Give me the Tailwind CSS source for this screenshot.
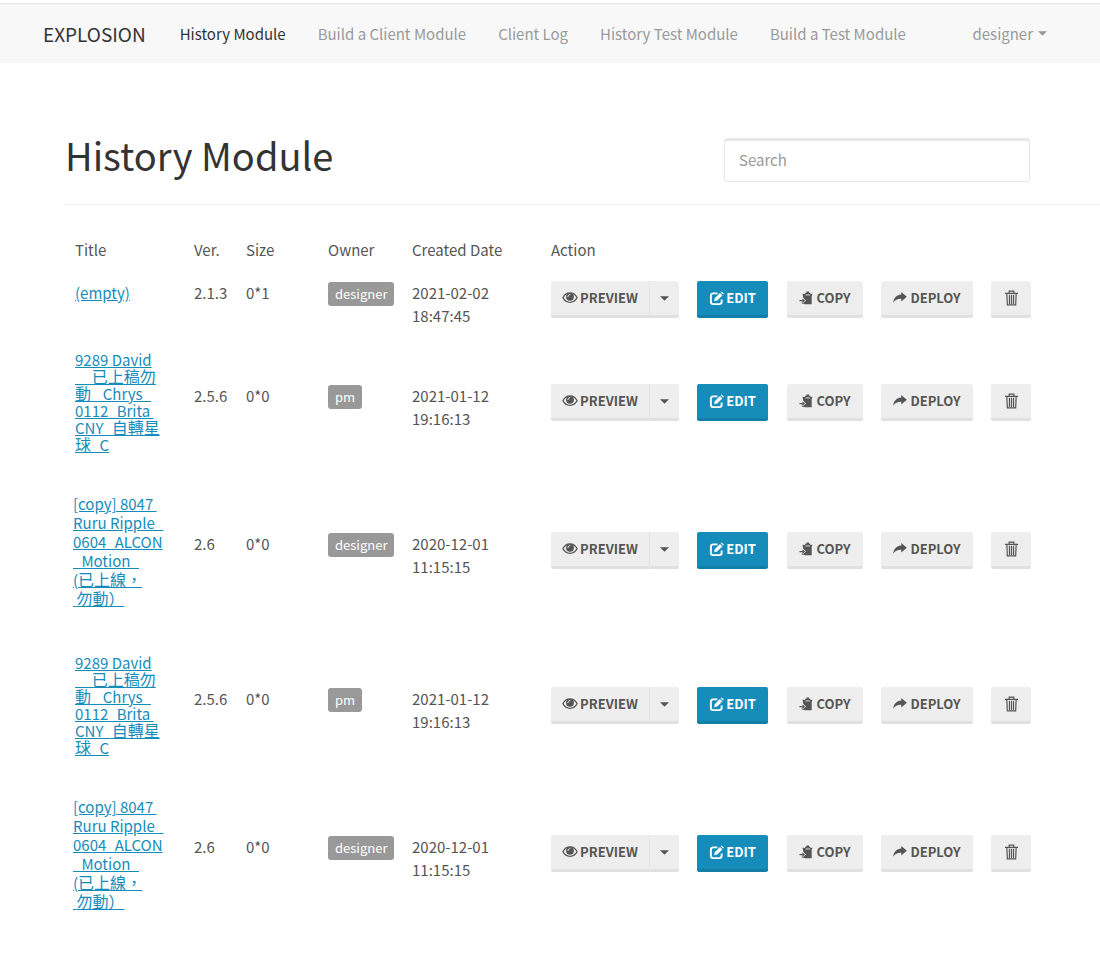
<!DOCTYPE html>
<html lang="zh-Hant">
<head>
<meta charset="utf-8">
<title>History Module</title>
<script src="https://cdn.jsdelivr.net/npm/@tailwindcss/browser@4"></script>
</head>
<body class="bg-white font-['Noto_Sans_CJK_TC',sans-serif] text-[15px] leading-6 text-[#555]">
<svg class="hidden" aria-hidden="true">
  <symbol id="eye" viewBox="0 0 16 14"><path fill="none" stroke="currentColor" stroke-width="1.300" d="M.9 6.800C2.500 3.500 5 1.900 8 1.900s5.500 1.600 7.100 4.900C13.500 9.700 11 11.300 8 11.300S2.500 9.700.9 6.800z"/><circle cx="8" cy="5.800" r="3.900" fill="currentColor"/><path fill="none" stroke="#eee" stroke-linecap="round" d="M5.900 5.600c.1-1.100.9-1.900 2-2"/></symbol>
  <symbol id="edit" viewBox="0 0 16 16"><path fill="none" stroke="currentColor" stroke-width="2" d="M9 2.500H4.500A2.500 2.500 0 0 0 2 5v6.500A2.500 2.500 0 0 0 4.500 14H11a2.500 2.500 0 0 0 2.500-2.500V9"/><path fill="currentColor" d="M5.500 10.800l.6-3.200 5.600-5.500 2.600 2.600-5.600 5.500zM12.500 1.300l1-.9 2.400 2.400-.9 1z"/></symbol>
  <symbol id="copy" viewBox="0 0 16 16"><path fill="currentColor" d="M4 3l3 .500V2h1.500V.500h3V2H13v1.500L15.500 3l-1 2.500V15H6.500l-1.500-1.500 3-2.700L5 8z"/><path fill="currentColor" d="M.5 10.200H4V8.500l3 2.400-3 2.500v-1.700H.5zM2 13.500h3.500V15z"/><path stroke="#eee" d="M7.500 4.500h5"/></symbol>
  <symbol id="share" viewBox="0 0 16 14"><path fill="currentColor" d="M9.500 0L16 5.500 9.500 11V8C5.500 7.800 2.500 9 0 12.500.7 7 4 3.300 9.500 3z"/></symbol>
  <symbol id="trash" viewBox="0 0 14 17"><path fill="none" stroke="currentColor" stroke-width="1.300" d="M0 3.500h14M4.500 3V1h5v2M2 4l.5 12h9L12 4M4.800 5v10M7 5v10M9.200 5v10"/></symbol>
  <symbol id="caret" viewBox="0 0 10 5"><path fill="currentColor" d="M0 0h10L5 5z"/></symbol>
</svg>

<header class="border-t-3 border-white bg-[#f8f8f8]">
  <nav class="flex h-[60px] items-center border-t border-[#e4e4e4] pr-[53px] pl-[43px] text-[#999]">
    <a href="#" class="mr-[34px] text-[19px] text-[#333]">EXPLOSION</a>
    <div class="flex gap-8">
      <a href="#" class="text-[#333]">History Module</a>
      <a href="#">Build a Client Module</a>
      <a href="#">Client Log</a>
      <a href="#">History Test Module</a>
      <a href="#">Build a Test Module</a>
    </div>
    <button type="button" class="ml-auto flex items-center gap-[5px]">designer <svg class="h-[5px] w-[9px]"><use href="#caret"/></svg></button>
  </nav>
</header>

<main class="pt-[75px] pl-[65px]">
  <div class="flex items-start justify-between border-b border-[#eee] pr-[70px] pb-[22px]">
    <h1 class="text-[38px] leading-[34px] text-[#333]">History Module</h1>
    <input type="search" aria-label="Search" placeholder="Search" class="h-11 w-[306px] rounded-[4px] border border-t-3 border-[#e7e7e7] px-[14px] pb-[3px] placeholder:text-[#999]">
  </div>
  <table class="mt-[33px] w-[966px] table-fixed text-left">
    <colgroup><col class="w-[129px]"><col class="w-[52px]"><col class="w-[82px]"><col class="w-[84px]"><col class="w-[139px]"><col></colgroup>
    <thead>
      <tr class="h-[34px] align-top">
        <th class="pl-[10px] font-normal">Title</th><th class="font-normal">Ver.</th><th class="font-normal">Size</th><th class="font-normal">Owner</th><th class="font-normal">Created Date</th><th class="font-normal">Action</th>
      </tr>
    </thead>
    <tbody id="rows"></tbody>
  </table>
</main>

<script>
const brita = ['9289 David', '__已上稿勿', '動 _Chrys_', '0112_Brita ', 'CNY_自轉星', '球_C'];
const alcon = ['[copy] 8047 ', 'Ruru Ripple_', '0604_ALCON', '_Motion_', '(已上線，', ' 勿動）'];
const kinds = {
  empty: { row: 'h-[70px] align-top', title: 'pt-[9px] pl-[10px]', link: 'leading-6', cell: 'pt-[9px]' },
  brita: { row: 'h-[144px] align-top', title: 'pt-[9px] pl-[10px]', link: 'block leading-[17px]', cell: 'pt-[42px]' },
  alcon: { row: 'h-[159px] align-top', title: 'pt-[8px] pl-[8px]', link: 'block leading-[19px]', cell: 'pt-[46px]' }
};
const modules = [
  ['empty', ['(empty)'], '2.1.3', '0*1', 'designer', '2021-02-02', '18:47:45'],
  ['brita', brita, '2.5.6', '0*0', 'pm', '2021-01-12', '19:16:13'],
  ['alcon', alcon, '2.6', '0*0', 'designer', '2020-12-01', '11:15:15'],
  ['brita', brita, '2.5.6', '0*0', 'pm', '2021-01-12', '19:16:13'],
  ['alcon', alcon, '2.6', '0*0', 'designer', '2020-12-01', '11:15:15']
];
const grey = 'flex h-[37px] items-center justify-center border-b-3 border-[#e0e0e0] bg-[#eee] text-[13px] font-bold text-[#555]';
const largerHan = line => line.replace(/[\u4e00-\u9fff\uff09\uff0c]+/g, '<span class="text-[16px]">$&</span>');
document.getElementById('rows').innerHTML = modules.map(([kind, title, ver, size, owner, date, time]) => {
  const k = kinds[kind];
  return `<tr class="${k.row}">
    <td class="${k.title}"><a href="#" class="${k.link} whitespace-pre text-[#158cba] underline">${title.map(largerHan).join('<br>')}</a></td>
    <td class="${k.cell}">${ver}</td>
    <td class="${k.cell}">${size}</td>
    <td class="${k.cell}"><span class="mt-px inline-block rounded-[3px] bg-[#999] px-[7px] text-[13px] text-white">${owner}</span></td>
    <td class="${k.cell} leading-[23px]">${date}<br>${time}</td>
    <td class="${k.cell}"><div class="flex">
      <button type="button" class="${grey} w-[98px] gap-[2px] rounded-l-[2px]"><svg class="h-[14px] w-4"><use href="#eye"/></svg>PREVIEW</button>
      <button type="button" aria-label="More preview options" class="${grey} mr-[18px] w-[30px] rounded-r-[2px] border-l border-l-[#e3e3e3]"><svg class="h-[5px] w-[9px]"><use href="#caret"/></svg></button>
      <button type="button" class="mr-[19px] flex h-[37px] w-[71px] items-center justify-center gap-[2px] rounded-[2px] border-b-3 border-[#137ea7] bg-[#158cba] text-[13px] font-bold text-white"><svg class="h-[15px] w-[15px]"><use href="#edit"/></svg>EDIT</button>
      <button type="button" class="${grey} mr-[18px] w-[76px] gap-[3px] rounded-[2px]"><svg class="h-[14px] w-[14px]"><use href="#copy"/></svg>COPY</button>
      <button type="button" class="${grey} mr-[18px] w-[92px] gap-[3px] rounded-[2px]"><svg class="h-[12px] w-[14px]"><use href="#share"/></svg>DEPLOY</button>
      <button type="button" aria-label="Delete" class="${grey} w-10 rounded-[2px]"><svg class="h-4 w-[13px]"><use href="#trash"/></svg></button>
    </div></td>
  </tr>`;
}).join('');
</script>
</body>
</html>
